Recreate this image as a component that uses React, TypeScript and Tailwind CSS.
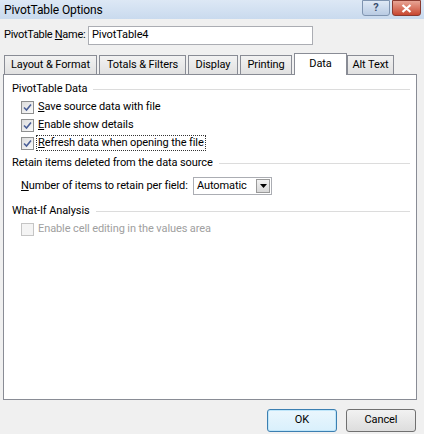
import React from "react";

const Check = ({ checked, disabled }: { checked?: boolean; disabled?: boolean }) => (
  <span
    className={
      "flex h-[13px] w-[13px] shrink-0 items-center justify-center border " +
      (disabled
        ? "border-[#c5c5c5] bg-[#f4f4f4]"
        : "border-[#8e8f8f] bg-gradient-to-br from-[#dcdcdc] to-[#fbfbfb]")
    }
  >
    {checked && (
      <svg width="9" height="9" viewBox="0 0 9 9">
        <path d="M1 4.5 L3.5 7 L8 1.5" fill="none" stroke="#4a5f97" strokeWidth="1.6" />
      </svg>
    )}
  </span>
);

const Heading = ({ text, className = "" }: { text: string; className?: string }) => (
  <div className={"flex h-[18px] items-center pl-[8px] pr-[6px] " + className}>
    <span>{text}</span>
    <span className="ml-[6px] h-px flex-1 bg-[#dcdcdc]" />
  </div>
);

const CheckRow = ({
  children,
  checked,
  disabled,
  focused,
}: {
  children: React.ReactNode;
  checked?: boolean;
  disabled?: boolean;
  focused?: boolean;
}) => (
  <div className="flex h-[18px] items-center pl-[17px]">
    <Check checked={checked} disabled={disabled} />
    <span
      className={
        "ml-[3px] px-px leading-[14px] " +
        (focused ? "outline outline-1 outline-dotted outline-[#333] " : "") +
        (disabled ? "text-[#a0a0a0]" : "")
      }
    >
      {children}
    </span>
  </div>
);

const Tab = ({ label, active, className = "" }: { label: string; active?: boolean; className?: string }) => (
  <div
    className={
      "flex shrink-0 items-center justify-center border border-b-0 border-[#898c95] " +
      (active
        ? "relative z-10 -mb-px h-[22px] bg-white "
        : "h-[19px] bg-gradient-to-b from-[#f2f2f2] to-[#e1e1e1] ") +
      className
    }
  >
    {label}
  </div>
);

export default function App() {
  return (
    <div
      className="flex h-[434px] w-[424px] flex-col whitespace-nowrap bg-[#f0f0f0] text-[11px] tracking-[-0.1px] text-black"
      style={{ fontFamily: "Roboto, 'Liberation Sans', sans-serif" }}
    >
      {/* title bar */}
      <div className="flex h-[19px] items-center justify-between bg-gradient-to-b from-[#dde8f5] to-[#c9daee] pl-[4px] pr-[3px] text-[12px]">
        <span>PivotTable Options</span>
        <div className="flex items-start gap-[2px] self-start">
          <div className="flex h-[16px] w-[28px] items-center justify-center rounded-b-[3px] border border-[#7f94b0] bg-gradient-to-b from-[#dfe9f5] to-[#b9cbe3] text-[11px] font-bold text-[#3b4f6e]">
            ?
          </div>
          <div className="flex h-[16px] w-[29px] items-center justify-center rounded-b-[3px] border border-[#8a3a30] bg-gradient-to-b from-[#e7a495] to-[#c7452f]">
            <svg width="11" height="9" viewBox="0 0 11 9">
              <path d="M1.5 1 L9.5 8 M9.5 1 L1.5 8" stroke="#fff" strokeWidth="2.2" />
            </svg>
          </div>
        </div>
      </div>

      {/* name row */}
      <div className="mt-[7px] flex items-center pl-[4px]">
        <span className="w-[84px] tracking-[-0.3px]">
          PivotTable <u>N</u>ame:
        </span>
        <div className="flex h-[19px] w-[225px] items-center border border-[#abadb3] bg-white pl-[3px]">
          PivotTable4
        </div>
      </div>

      {/* tabs */}
      <div className="mt-[8px] flex h-[21px] items-end pl-[4px]">
        <Tab label="Layout & Format" className="w-[93px]" />
        <Tab label="Totals & Filters" className="ml-[2px] w-[87px]" />
        <Tab label="Display" className="ml-[2px] w-[50px]" />
        <Tab label="Printing" className="ml-[2px] w-[52px]" />
        <Tab label="Data" active className="ml-[2px] w-[53px]" />
        <Tab label="Alt Text" className="w-[47px]" />
      </div>

      {/* panel */}
      <div className="ml-[3px] flex h-[326px] w-[414px] flex-col border border-[#898c95] bg-white pt-[5px]">
        <Heading text="PivotTable Data" />
        <CheckRow checked>
          <u>S</u>ave source data with file
        </CheckRow>
        <CheckRow checked>
          <u>E</u>nable show details
        </CheckRow>
        <CheckRow checked focused>
          <u>R</u>efresh data when opening the file
        </CheckRow>
        <Heading text="Retain items deleted from the data source" className="mt-[2px]" />
        <div className="mt-[4px] flex h-[20px] items-center pl-[17px]">
          <span className="w-[172px]">
            <u>N</u>umber of items to retain per field:
          </span>
          <div className="flex h-[18px] w-[79px] items-center border border-[#abadb3] bg-white pl-[3px]">
            <span className="flex-1">Automatic</span>
            <div className="mr-px flex h-[14px] w-[14px] items-center justify-center border border-[#9a9a9a] bg-gradient-to-b from-[#f2f2f2] to-[#d8d8d8]">
              <svg width="7" height="4" viewBox="0 0 7 4">
                <path d="M0 0 H7 L3.5 4 Z" fill="#000" />
              </svg>
            </div>
          </div>
        </div>
        <Heading text="What-If Analysis" className="mt-[6px]" />
        <CheckRow disabled>Enable cell editing in the values area</CheckRow>
      </div>

      {/* buttons */}
      <div className="mt-[9px] flex justify-end gap-[9px] pr-[8px]">
        <button className="h-[23px] w-[70px] rounded-[3px] border border-[#3c7fb1] bg-gradient-to-b from-[#eaf6fd] to-[#d9f0fc] shadow-[inset_0_0_0_1px_#bfe6fa]">
          OK
        </button>
        <button className="h-[23px] w-[70px] rounded-[3px] border border-[#707070] bg-gradient-to-b from-[#f2f2f2] to-[#dddddd]">
          Cancel
        </button>
      </div>
    </div>
  );
}
